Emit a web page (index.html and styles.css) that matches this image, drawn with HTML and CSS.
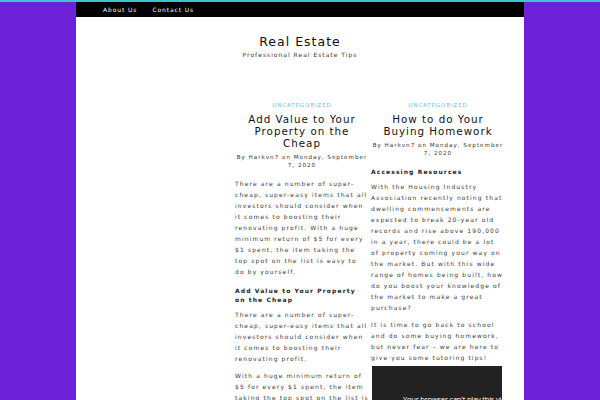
FILE: index.html
```html
<!DOCTYPE html>
<html lang="en">
<head>
<meta charset="utf-8">
<title>Real Estate</title>
<link rel="stylesheet" href="styles.css">
</head>
<body>
<div class="topline"></div>
<div class="page">
  <nav class="nav">
    <a href="#">About Us</a>
    <a href="#">Contact Us</a>
  </nav>
  <header class="site-header">
    <h1 class="site-title">Real Estate</h1>
    <p class="site-tagline">Professional Real Estate Tips</p>
  </header>
  <main class="posts">
    <article class="post">
      <div class="cat">Uncategorized</div>
      <h2 class="post-title">Add Value to Your Property on the Cheap</h2>
      <div class="meta">By Harkvn7 on Monday, September 7, 2020</div>
      <div class="content">
        <p>There are a number of super-cheap, super-easy items that all investors should consider when it comes to boosting their renovating profit. With a huge minimum return of $5 for every $1 spent, the item taking the top spot on the list is easy to do by yourself.</p>
        <h3>Add Value to Your Property on the Cheap</h3>
        <p>There are a number of super-cheap, super-easy items that all investors should consider when it comes to boosting their renovating profit.</p>
        <p>With a huge minimum return of $5 for every $1 spent, the item taking the top spot on the list is easy to do by yourself.</p>
      </div>
    </article>
    <article class="post">
      <div class="cat">Uncategorized</div>
      <h2 class="post-title">How to do Your Buying Homework</h2>
      <div class="meta">By Harkvn7 on Monday, September 7, 2020</div>
      <div class="content">
        <h3>Accessing Resources</h3>
        <p>With the Housing Industry Association recently noting that dwelling commencements are expected to break 20-year old records and rise above 190,000 in a year, there could be a lot of property coming your way on the market. But with this wide range of homes being built, how do you boost your knowledge of the market to make a great purchase?</p>
        <p>It is time to go back to school and do some buying homework, but never fear – we are here to give you some tutoring tips!</p>
        <div class="video"><span>Your browser can't play this video.</span></div>
      </div>
    </article>
  </main>
</div>
</body>
</html>
```

FILE: styles.css
```css
html, body {
  margin: 0;
  padding: 0;
}
body {
  background: #6d21d9;
  font-family: "DejaVu Sans", Verdana, sans-serif;
  height: 400px;
  overflow: hidden;
}
.topline {
  height: 2px;
  background: #3cc4d4;
}
.page {
  width: 448px;
  margin: 0 auto;
  background: #ffffff;
  min-height: 398px;
}
.nav {
  background: #000000;
  height: 15px;
  display: flex;
  gap: 15px;
  padding-left: 27px;
  align-items: center;
}
.nav a {
  color: #ffffff;
  text-decoration: none;
  font-size: 6px;
  letter-spacing: 0.9px;
  line-height: 15px;
}
.site-header {
  text-align: center;
  padding-top: 17px;
}
.site-title {
  margin: 0;
  font-size: 12.5px;
  font-weight: normal;
  letter-spacing: 1px;
  line-height: 16px;
  color: #111111;
}
.site-tagline {
  margin: 0;
  font-size: 6px;
  letter-spacing: 1px;
  line-height: 10px;
  color: #333333;
}
.posts {
  display: grid;
  grid-template-columns: 134px 134px;
  column-gap: 2px;
  padding-left: 159px;
  margin-top: 41px;
  align-items: start;
}
.cat {
  text-align: center;
  text-transform: uppercase;
  font-size: 5.5px;
  letter-spacing: 0.9px;
  line-height: 8px;
  color: #5ec6cf;
}
.post-title {
  margin: 4px 0 0;
  text-align: center;
  font-size: 10.3px;
  font-weight: normal;
  letter-spacing: 1px;
  line-height: 12px;
  color: #111111;
}
.meta {
  margin-top: 4px;
  text-align: center;
  font-size: 5.6px;
  letter-spacing: 1px;
  line-height: 8px;
  color: #333333;
}
.content {
  padding-top: 8.5px;
  color: #3a3a3a;
}
.content p {
  margin: 0 0 6px;
  font-size: 6px;
  letter-spacing: 1.12px;
  line-height: 11px;
}
.content h3 {
  margin: 9px 0 5px;
  font-size: 6px;
  font-weight: bold;
  letter-spacing: 1.1px;
  line-height: 9px;
  color: #222222;
}
.content h3:first-child {
  margin-top: 1px;
}
.video {
  margin-top: -3px;
  margin-left: 1px;
  width: 130px;
  height: 60px;
  background: #222222;
  overflow: hidden;
  white-space: nowrap;
  padding: 21px 0 0 31px;
  box-sizing: border-box;
}
.video span {
  font-family: "Open Sans", "Noto Sans", sans-serif;
  font-size: 7.5px;
  line-height: 10px;
  color: #ffffff;
  letter-spacing: -0.2px;
}
```
